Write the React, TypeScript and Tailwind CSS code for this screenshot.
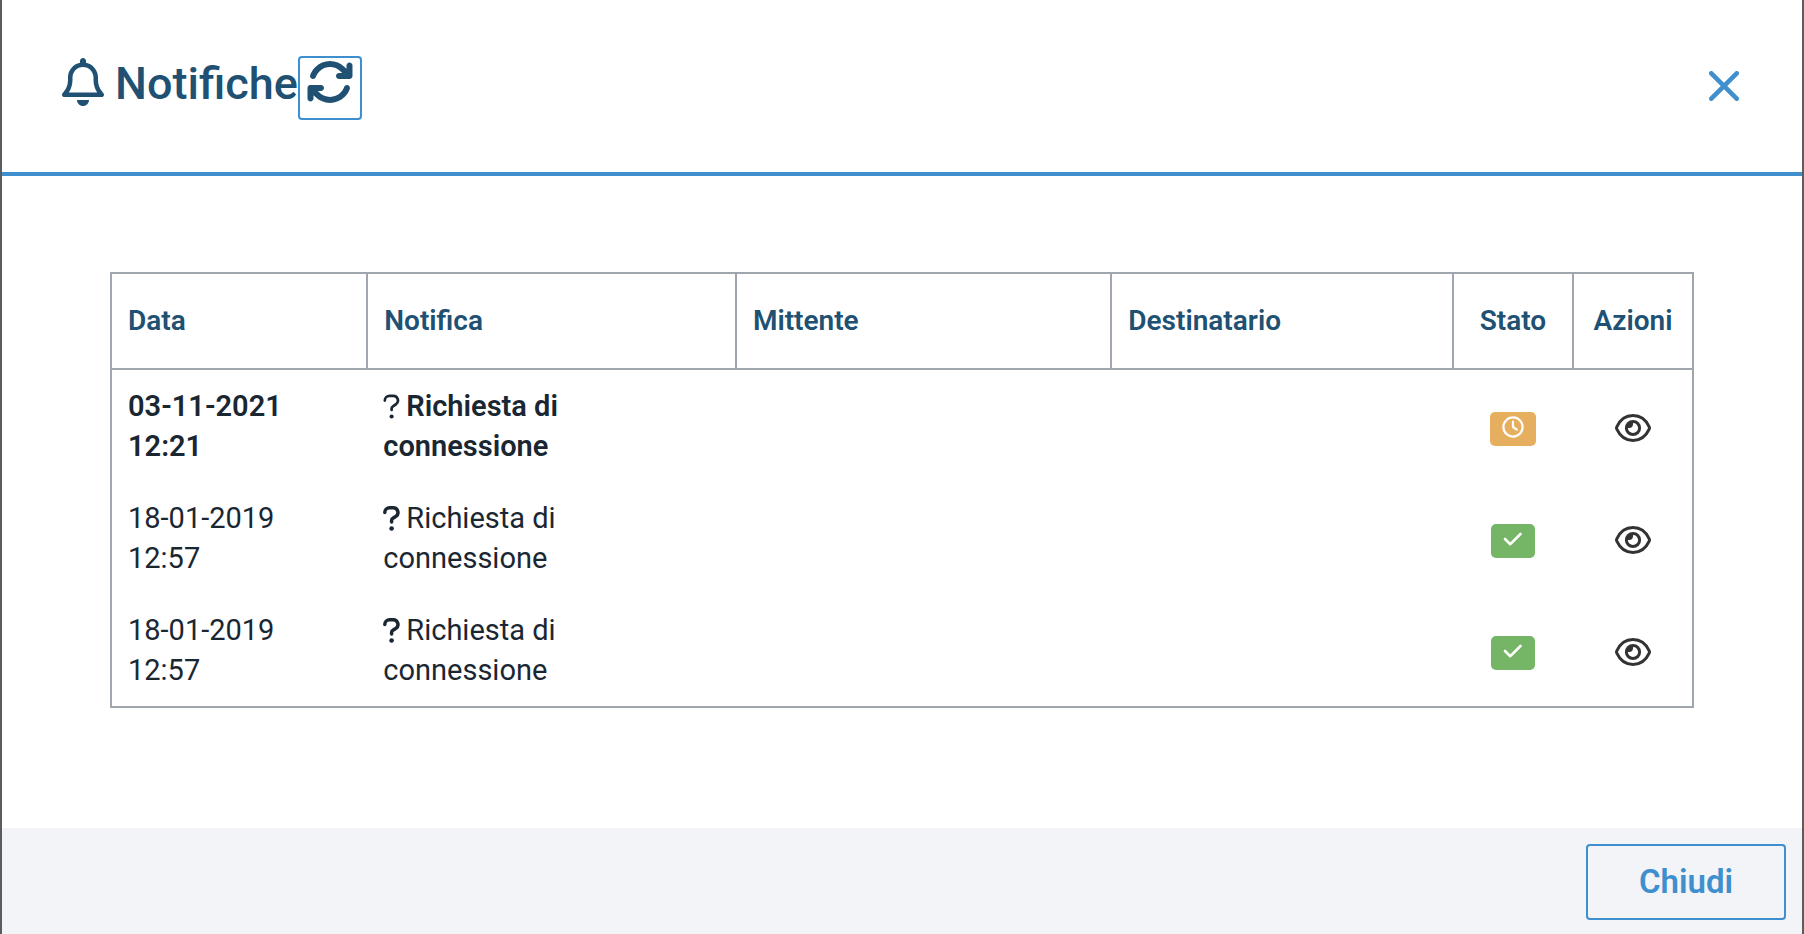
import { FaArrowsRotate, FaRegBell } from "react-icons/fa6";

type Notification = {
  date: string;
  time: string;
  title: string;
  pending: boolean;
};

const notifications: Notification[] = [
  { date: "03-11-2021", time: "12:21", title: "Richiesta di connessione", pending: true },
  { date: "18-01-2019", time: "12:57", title: "Richiesta di connessione", pending: false },
  { date: "18-01-2019", time: "12:57", title: "Richiesta di connessione", pending: false },
];

const CloseIcon = () => (
  <svg viewBox="0 0 30 30" className="size-[30px]" fill="none" stroke="currentColor" strokeWidth="4.6" strokeLinecap="round">
    <path d="M2.300 2.300 27.700 27.700M27.700 2.300 2.300 27.700" />
  </svg>
);

const QuestionIcon = ({ thin }: { thin: boolean }) => (
  <svg
    viewBox="0 0 17 25"
    className="inline-block w-[17px] h-[25px] mr-1.5 -mt-1"
    fill="none"
    stroke="currentColor"
    strokeWidth={thin ? 2.7 : 3.5}
    strokeLinecap="round"
    strokeLinejoin="round"
  >
    <path d="M1.8 6.600v-.2A4.700 4.700 0 0 1 6.500 1.800h3.700a4.700 4.700 0 0 1 2.500 8.700L9.900 12.300A2.700 2.700 0 0 0 8.600 14.600V16" />
    <circle cx="8.600" cy="22.500" r={thin ? 2.1 : 2.3} fill="currentColor" stroke="none" />
  </svg>
);

const EyeIcon = () => (
  <svg viewBox="0 0 36 28" className="w-9 h-7" fill="none" stroke="currentColor" strokeWidth="3">
    <path d="M18 1.500c-8 0-13.400 5.200-16.200 11.300a2.800 2.800 0 0 0 0 2.400C4.600 21.300 10 26.500 18 26.500s13.400-5.200 16.200-11.300a2.800 2.800 0 0 0 0-2.400C31.400 6.700 26 1.500 18 1.500Z" />
    <circle cx="18" cy="14" r="6.600" />
    <path d="M18 8v2a4 4 0 0 1-4 4h-2a6 6 0 0 1 6-6Z" fill="currentColor" stroke="none" />
  </svg>
);

const StatusBadge = ({ pending }: { pending: boolean }) =>
  pending ? (
    <span className="inline-flex justify-center w-[46px] h-[34px] pt-1 rounded-[5px] bg-[#e6af5f] text-white">
      <svg viewBox="0 0 22 22" className="size-[22px]" fill="none" stroke="currentColor" strokeWidth="2.2" strokeLinecap="round" strokeLinejoin="round">
        <circle cx="11" cy="11" r="9.600" />
        <path d="M11 5.500V11l3.800 2.600" />
      </svg>
    </span>
  ) : (
    <span className="inline-flex justify-center w-11 h-[34px] pt-1 rounded-[5px] bg-[#75b666] text-white">
      <svg viewBox="0 0 20 22" className="w-5 h-[22px]" fill="none" stroke="currentColor" strokeWidth="2.6" strokeLinecap="round" strokeLinejoin="round">
        <path d="M2 11 7.300 16.200 17.500 6" />
      </svg>
    </span>
  );

const App = () => {
  return (
    <div className="min-h-screen bg-[#5c5c5c] px-0.5 font-['Roboto',sans-serif]">
      <div className="min-h-screen flex flex-col bg-white text-[#1a2733]">
        <header className="flex items-start justify-between h-44 pt-14 pl-[60px] pr-[63px] border-b-4 border-[#3f8fce]">
          <div className="flex items-start text-[#205072]">
            <FaRegBell className="w-[42px] h-12 mt-0.5 mr-[11px]" />
            <h1 className="text-[45px] leading-14 font-medium">Notifiche</h1>
            <button
              type="button"
              aria-label="Aggiorna"
              className="flex justify-center w-16 h-16 border-2 border-[#3f8fce] rounded-[4px]"
            >
              <FaArrowsRotate className="size-12" />
            </button>
          </div>
          <button type="button" aria-label="Chiudi finestra" className="mt-[15px] text-[#3f8fce]">
            <CloseIcon />
          </button>
        </header>

        <main className="grow pt-24 pb-30 px-[108px]">
          <table className="w-full table-fixed border-collapse border-2 border-[#9fa6ad] leading-10 text-left">
            <thead className="text-[28px] text-[#205072]">
              <tr className="h-24 border-b-2 border-[#9fa6ad]">
                <th className="w-[16.2%] px-4 font-semibold border-r-2 border-[#9fa6ad]">Data</th>
                <th className="w-[23.3%] px-4 font-semibold border-r-2 border-[#9fa6ad]">Notifica</th>
                <th className="px-4 font-semibold border-r-2 border-[#9fa6ad]">Mittente</th>
                <th className="w-[21.6%] px-4 font-semibold border-r-2 border-[#9fa6ad]">Destinatario</th>
                <th className="w-[120px] text-center font-semibold border-r-2 border-[#9fa6ad]">Stato</th>
                <th className="w-[120px] text-center font-semibold">Azioni</th>
              </tr>
            </thead>
            <tbody className="text-[29px]">
              {notifications.map((item, index) => (
                <tr key={index} className={item.pending ? "font-semibold" : ""}>
                  <td className="p-4">
                    {item.date}
                    <br />
                    {item.time}
                  </td>
                  <td className="py-4 pl-4 pr-32">
                    <QuestionIcon thin={item.pending} />
                    {item.title}
                  </td>
                  <td></td>
                  <td></td>
                  <td>
                    <div className="flex justify-center pt-1.5">
                      <StatusBadge pending={item.pending} />
                    </div>
                  </td>
                  <td>
                    <div className="flex justify-center pt-1">
                      <button type="button" aria-label="Visualizza" className="text-[#333333]">
                        <EyeIcon />
                      </button>
                    </div>
                  </td>
                </tr>
              ))}
            </tbody>
          </table>
        </main>

        <footer className="flex justify-end pt-4 pb-3.5 px-4 bg-[#f2f4f8]">
          <button
            type="button"
            className="w-[200px] h-[76px] border-2 border-[#3f8fce] rounded-[4px] text-[33px] font-semibold text-[#3f8fce]"
          >
            Chiudi
          </button>
        </footer>
      </div>
    </div>
  );
};

export default App;
